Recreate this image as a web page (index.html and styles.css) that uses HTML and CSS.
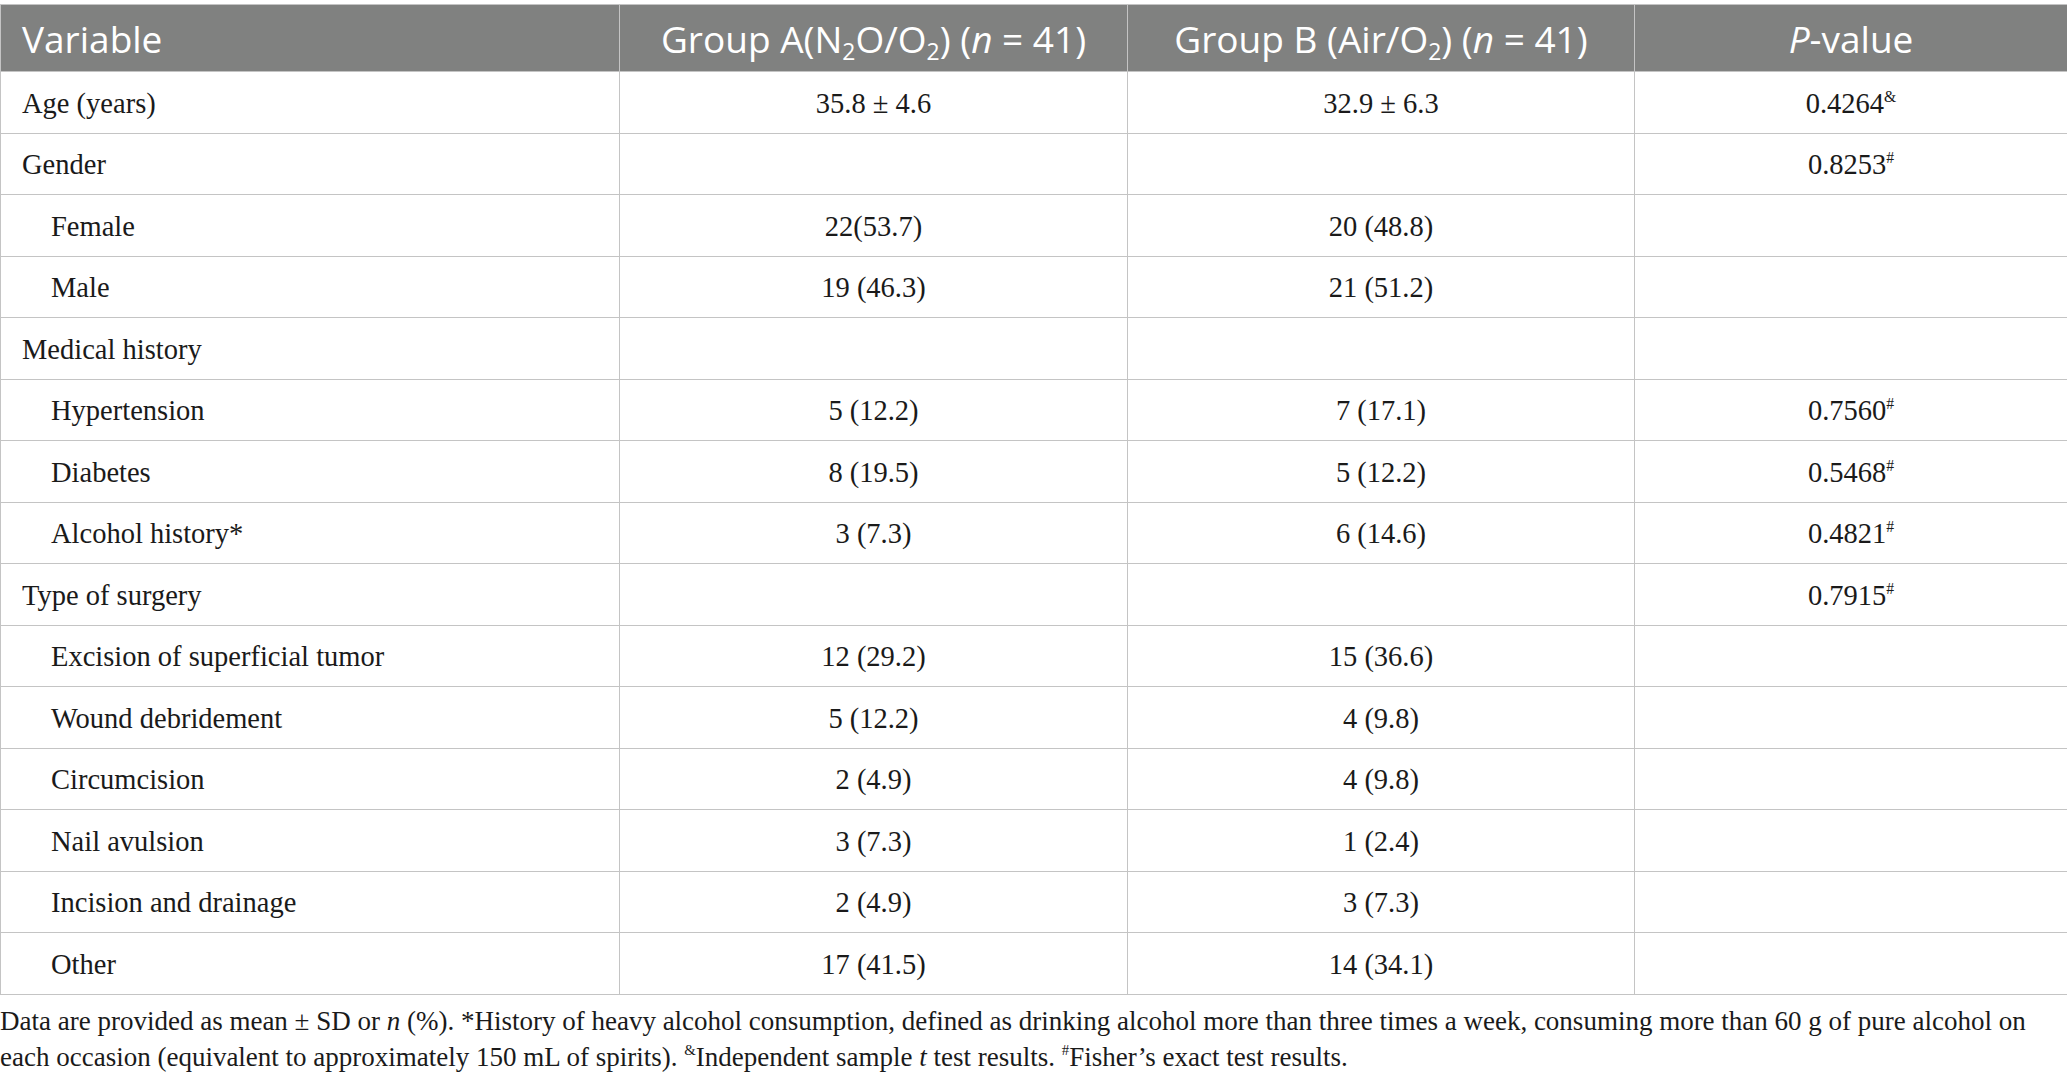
FILE: index.html
```html
<!DOCTYPE html>
<html lang="en">
<head>
<meta charset="utf-8">
<title>Table</title>
<link rel="stylesheet" href="styles.css">
</head>
<body>
<div class="wrap">
<table class="data">
  <colgroup>
    <col class="c1"><col class="c2"><col class="c3"><col class="c4">
  </colgroup>
  <thead>
    <tr>
      <th class="left">Variable</th>
      <th>Group A(N<sub>2</sub>O/O<sub>2</sub>) (<i>n</i> = 41)</th>
      <th>Group B (Air/O<sub>2</sub>) (<i>n</i> = 41)</th>
      <th><i>P</i>-value</th>
    </tr>
  </thead>
  <tbody>
    <tr><td class="left">Age (years)</td><td>35.8 ± 4.6</td><td>32.9 ± 6.3</td><td>0.4264<sup>&amp;</sup></td></tr>
    <tr><td class="left">Gender</td><td></td><td></td><td>0.8253<sup>#</sup></td></tr>
    <tr><td class="left sub">Female</td><td>22(53.7)</td><td>20 (48.8)</td><td></td></tr>
    <tr><td class="left sub">Male</td><td>19 (46.3)</td><td>21 (51.2)</td><td></td></tr>
    <tr><td class="left">Medical history</td><td></td><td></td><td></td></tr>
    <tr><td class="left sub">Hypertension</td><td>5 (12.2)</td><td>7 (17.1)</td><td>0.7560<sup>#</sup></td></tr>
    <tr><td class="left sub">Diabetes</td><td>8 (19.5)</td><td>5 (12.2)</td><td>0.5468<sup>#</sup></td></tr>
    <tr><td class="left sub">Alcohol history*</td><td>3 (7.3)</td><td>6 (14.6)</td><td>0.4821<sup>#</sup></td></tr>
    <tr><td class="left">Type of surgery</td><td></td><td></td><td>0.7915<sup>#</sup></td></tr>
    <tr><td class="left sub">Excision of superficial tumor</td><td>12 (29.2)</td><td>15 (36.6)</td><td></td></tr>
    <tr><td class="left sub">Wound debridement</td><td>5 (12.2)</td><td>4 (9.8)</td><td></td></tr>
    <tr><td class="left sub">Circumcision</td><td>2 (4.9)</td><td>4 (9.8)</td><td></td></tr>
    <tr><td class="left sub">Nail avulsion</td><td>3 (7.3)</td><td>1 (2.4)</td><td></td></tr>
    <tr><td class="left sub">Incision and drainage</td><td>2 (4.9)</td><td>3 (7.3)</td><td></td></tr>
    <tr><td class="left sub">Other</td><td>17 (41.5)</td><td>14 (34.1)</td><td></td></tr>
  </tbody>
</table>
<p class="note">Data are provided as mean ± SD or <i>n</i> (%). *History of heavy alcohol consumption, defined as drinking alcohol more than three times a week, consuming more than 60 g of pure alcohol on each occasion (equivalent to approximately 150 mL of spirits). <sup>&amp;</sup>Independent sample <i>t</i> test results. <sup>#</sup>Fisher’s exact test results.</p>
</div>
</body>
</html>
```

FILE: styles.css
```css
html, body {
  margin: 0;
  padding: 0;
  background: #ffffff;
}
body {
  padding-top: 4px;
}
.wrap {
  width: 2067px;
}
.data {
  width: 2067px;
  border-collapse: collapse;
  table-layout: fixed;
  font-family: "Liberation Serif", "Times New Roman", serif;
  color: #1a1a1a;
}
.c1 { width: 619px; }
.c2 { width: 508px; }
.c3 { width: 507px; }
.c4 { width: 433px; }
.data th, .data td {
  border: 1px solid #c4c4c4;
  text-align: center;
  padding: 0 21px;
  white-space: nowrap;
}
.data th {
  background: #808180;
  color: #ffffff;
  font-family: "Open Sans", "Noto Sans", sans-serif;
  font-weight: 400;
  font-size: 37px;
  height: 66px;
  line-height: 1;
}
.data th sub {
  font-size: 0.62em;
  vertical-align: -0.3em;
  line-height: 0;
}
.data td {
  font-size: 28.5px;
  height: 57.5px;
  padding-top: 3px;
  padding-bottom: 0;
  line-height: 1;
}
.data sup {
  font-size: 0.55em;
  vertical-align: 0.7em;
  line-height: 0;
}
.data .left {
  text-align: left;
}
.data td.sub {
  padding-left: 50px;
}
.note {
  margin: 8px 0 0 0;
  font-family: "Liberation Serif", "Times New Roman", serif;
  font-size: 27px;
  line-height: 36px;
  color: #1a1a1a;
}
.note sup {
  font-size: 0.55em;
  vertical-align: 0.75em;
  line-height: 0;
}
```
